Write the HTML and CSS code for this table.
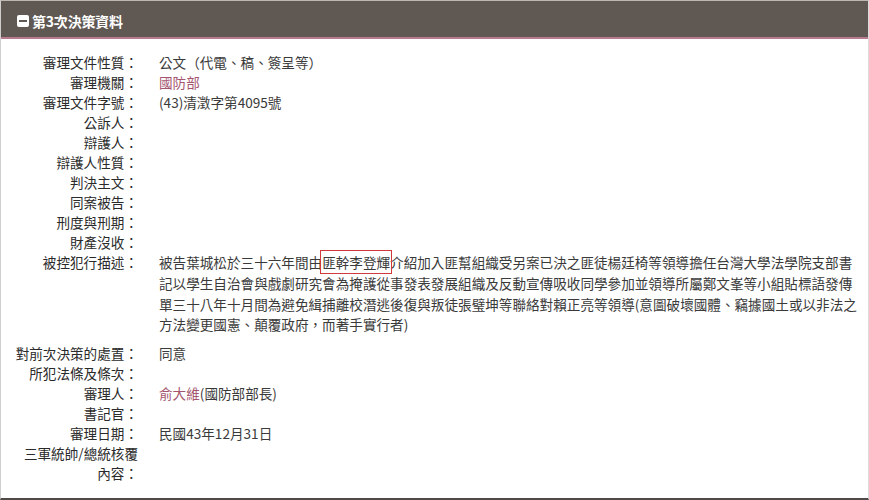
FILE: index.html
```html
<!DOCTYPE html>
<html>
<head>
<meta charset="UTF-8">
<title>第3次決策資料</title>
<link rel="stylesheet" href="styles.css">
</head>
<body>
	<div class="panel">
		<div class="panel-head">
			<span class="toggle"></span>
			<h2>第3次決策資料</h2>
		</div>

		<div class="panel-body">
			<dl class="info">
				<dt>審理文件性質：</dt>
				<dd>公文（代電、稿、簽呈等）</dd>
				<dt>審理機關：</dt>
				<dd><span class="link">國防部</span></dd>
				<dt>審理文件字號：</dt>
				<dd>(43)清澂字第4095號</dd>
				<dt>公訴人：</dt>
				<dd></dd>
				<dt>辯護人：</dt>
				<dd></dd>
				<dt>辯護人性質：</dt>
				<dd></dd>
				<dt>判決主文：</dt>
				<dd></dd>
				<dt>同案被告：</dt>
				<dd></dd>
				<dt>刑度與刑期：</dt>
				<dd></dd>
				<dt>財產沒收：</dt>
				<dd></dd>
				<dt>被控犯行描述：</dt>
				<dd class="desc">被告葉城松於三十六年間由<span class="mark">匪幹李登輝</span>介紹加入匪幫組織受另案已決之匪徒楊廷椅等領導擔任台灣大學法學院支部書記以學生自治會與戲劇研究會為掩護從事發表發展組織及反動宣傳吸收同學參加並領導所屬鄭文峯等小組貼標語發傳單三十八年十月間為避免緝捕離校潛逃後復與叛徒張璧坤等聯絡對賴正亮等領導(意圖破壞國體、竊據國土或以非法之方法變更國憲、顛覆政府，而著手實行者)</dd>
				<dt>對前次決策的處置：</dt>
				<dd>同意</dd>
				<dt>所犯法條及條次：</dt>
				<dd></dd>
				<dt>審理人：</dt>
				<dd><span class="link">俞大維</span>(國防部部長)</dd>
				<dt>書記官：</dt>
				<dd></dd>
				<dt>審理日期：</dt>
				<dd>民國43年12月31日</dd>
				<dt>三軍統帥/總統核覆內容：</dt>
				<dd></dd>
			</dl>
		</div>
	</div>
</body>
</html>
```

FILE: styles.css
```css
body {
	margin: 0;
	background: #fff;
	font-family: "Noto Sans CJK TC", "Noto Sans", sans-serif;
	color: #333;
}

.panel {
	height: 500px;
	box-sizing: border-box;
	border-left: 1px solid #cfcfcf;
	border-right: 1px solid #dcdcdc;
	border-bottom: 2px solid #4f4a47;
	border-top: 1px solid #bdb6b1;
}

.panel-head {
	display: flex;
	align-items: center;
	gap: 3px;
	height: 32px;
	padding: 4px 0 0 16px;
	background: #5f5853;
	border-bottom: 2px solid #b87a8e;
}

.toggle {
	width: 12px;
	height: 12px;
	border-radius: 2px;
	background: #fff;
	display: flex;
	align-items: center;
	justify-content: center;
}

.toggle::before {
	content: "";
	width: 8px;
	height: 2px;
	background: #5f5853;
}

.panel-head h2 {
	margin: 0;
	font-size: 14px;
	font-weight: bold;
	color: #fff;
	letter-spacing: -0.2px;
}

.panel-body {
	padding: 13px 8px 0 12px;
}

.info {
	display: grid;
	grid-template-columns: 125px 1fr;
	column-gap: 21px;
	margin: 0;
	font-size: 13.6px;
	line-height: 20px;
}

.info dt {
	text-align: right;
	color: #2a2a2a;
}

.info dd {
	margin: 0;
	color: #3a3a3a;
	min-height: 20px;
}

.info .desc {
	line-height: 20.8px;
	margin-bottom: 8px;
}

.link {
	color: #a5566f;
}

.mark {
	outline: 1px solid #d2393d;
	outline-offset: 1px;
}
```
